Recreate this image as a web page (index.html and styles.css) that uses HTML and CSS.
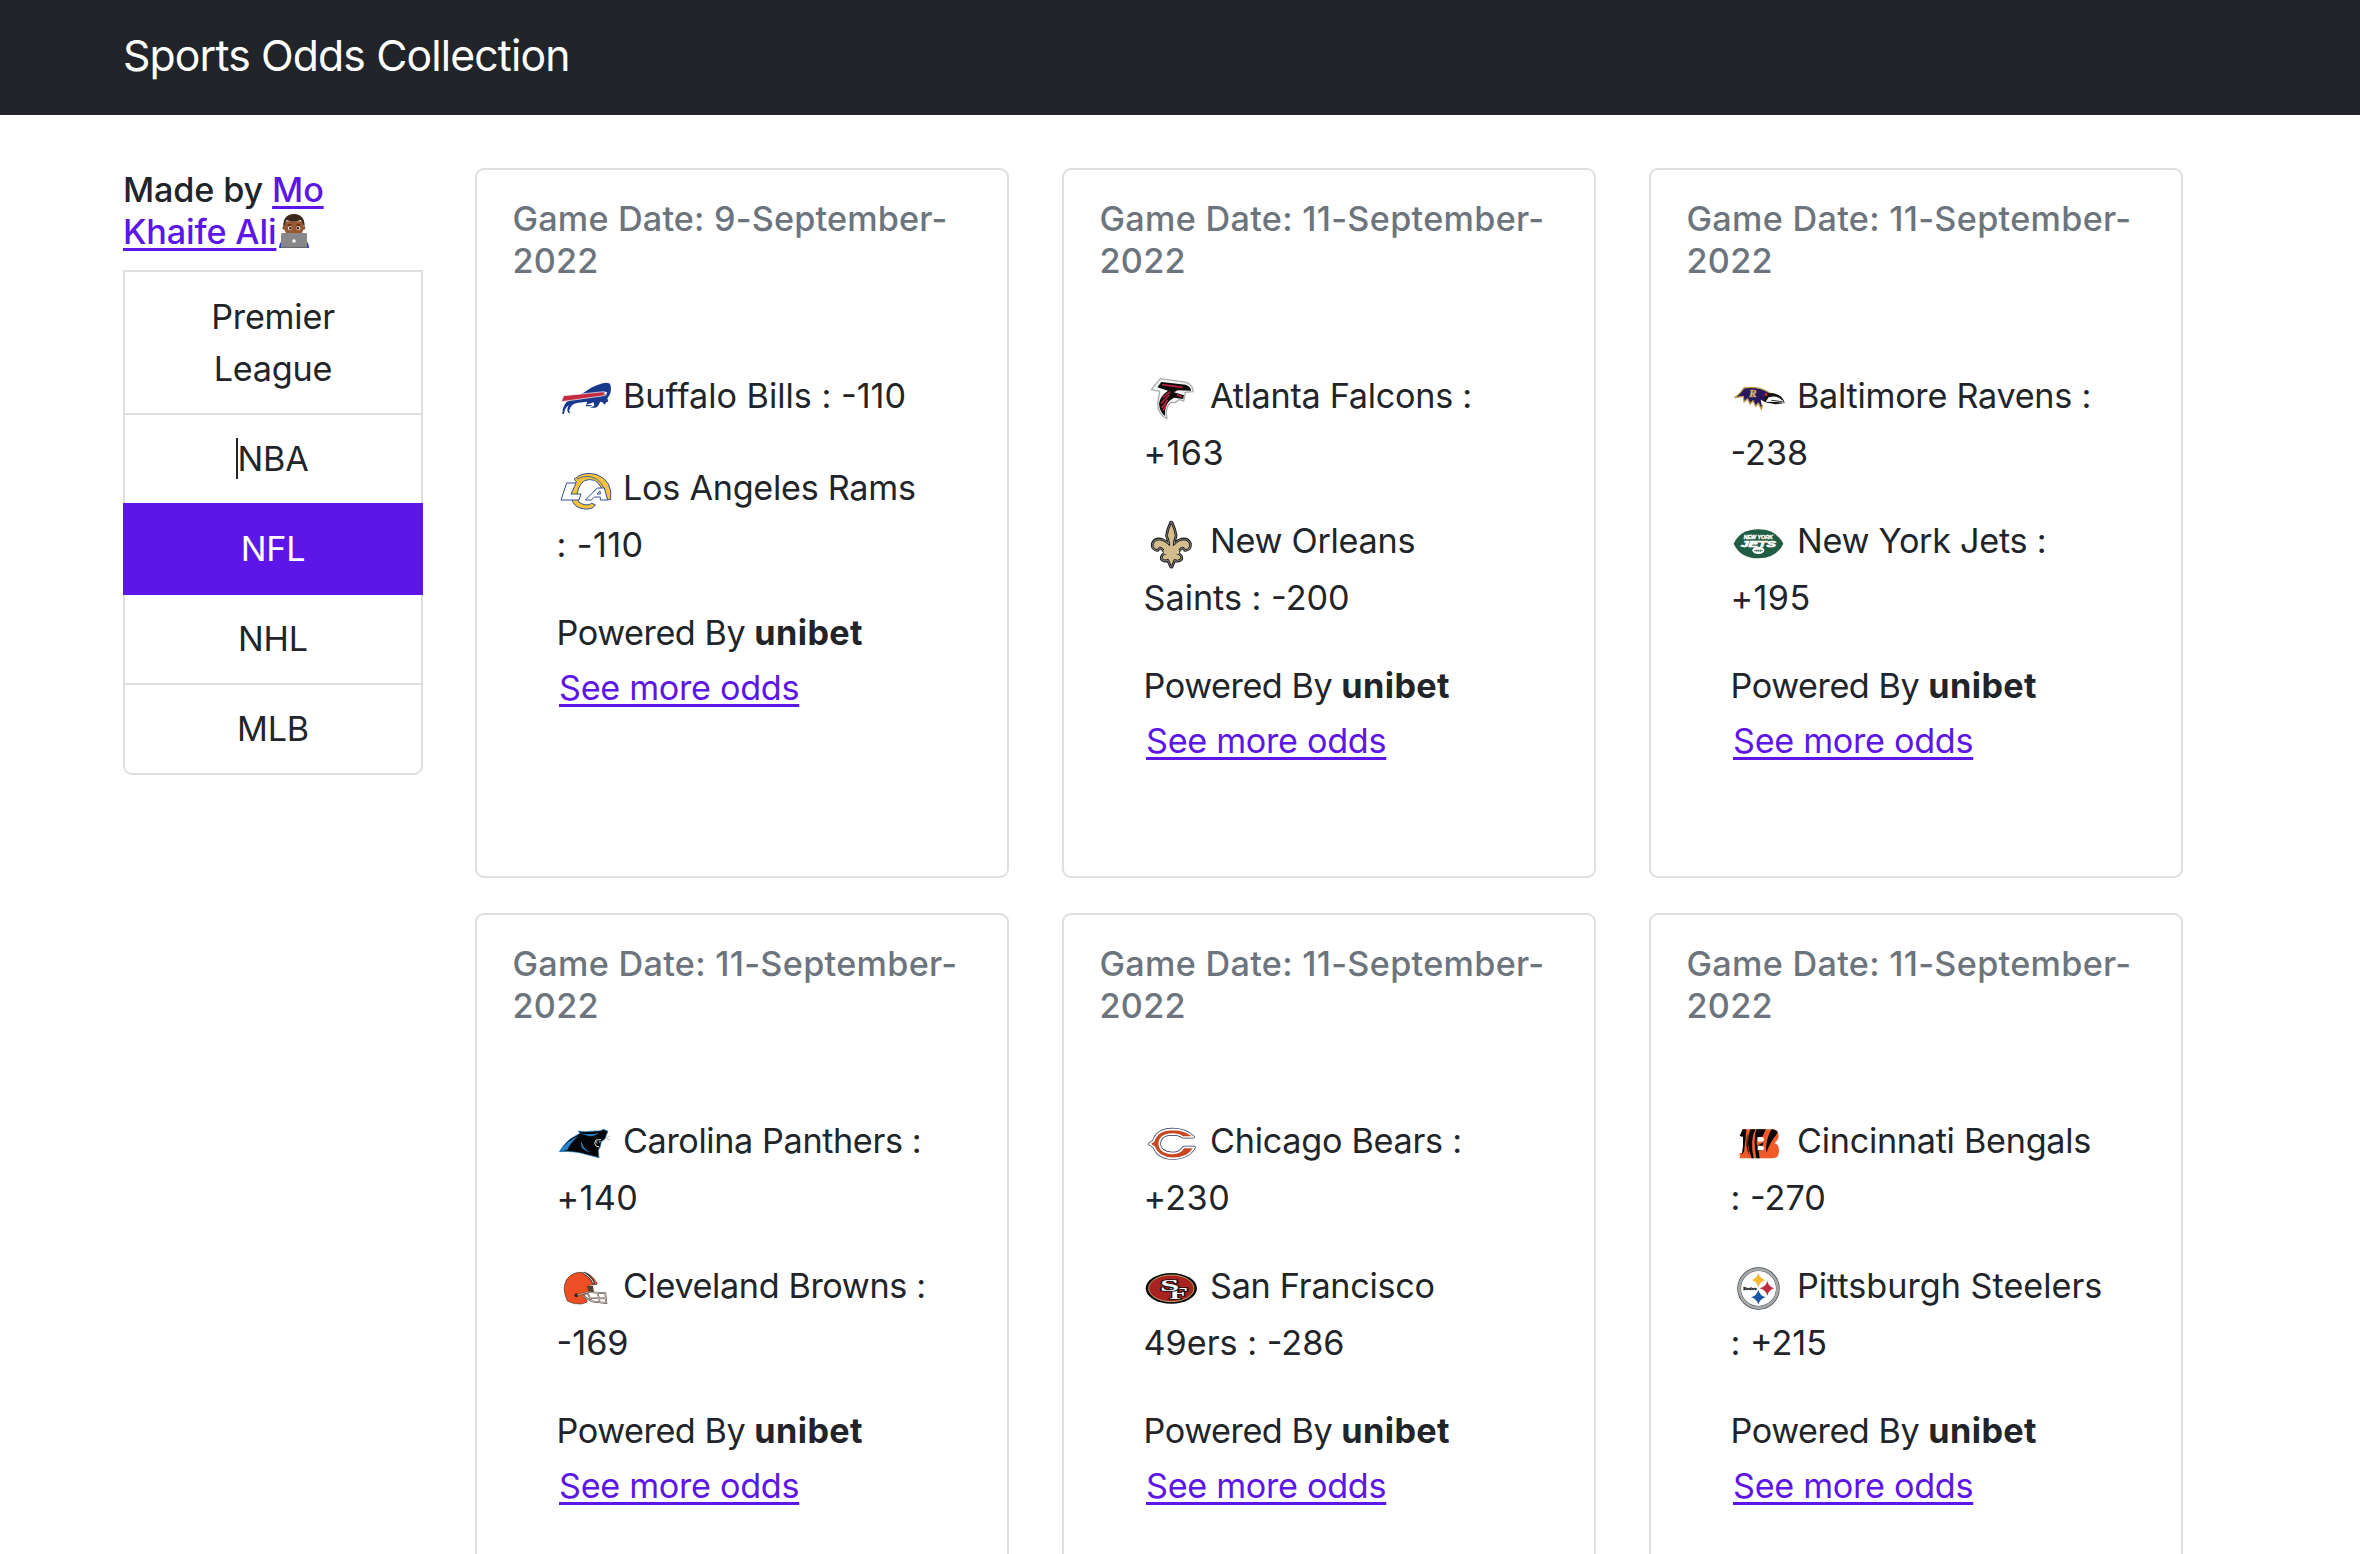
FILE: index.html
```
<!DOCTYPE html>
<html lang="en">
<head>
<meta charset="utf-8">
<title>Sports Odds Collection</title>
<link rel="stylesheet" href="styles.css">
</head>
<body>
<nav class="navbar"><span class="brand">Sports Odds Collection</span></nav>
<main class="container">
  <aside class="sidebar">
    <h5 class="credit">Made by <a href="#">Mo</a><br><a href="#">Khaife Ali</a><svg class="emoji" viewBox="540 642 90 102"><path fill="#303ed8" d="M540 744Q541 724 554 720H618Q629 724 630 744z"/><circle cx="555" cy="684" r="5" fill="#854b2d"/><circle cx="614" cy="684" r="5" fill="#854b2d"/><path fill="#99582f" d="M555 664H614V684Q611 708 585 708Q559 708 555 684z"/><path fill="#3d271d" d="M553 681Q551 643 585 642Q618 643 617 681L612 673Q611 665 605 660Q583 669 563 660Q558 666 558 674z"/><circle cx="573" cy="685" r="6" fill="#f5eee8"/><circle cx="598" cy="685" r="6" fill="#f5eee8"/><circle cx="574" cy="685" r="3.8" fill="#3c1d0d"/><circle cx="597" cy="685" r="3.8" fill="#3c1d0d"/><path d="M566 675h11M593 675h11" stroke="#351d12" stroke-width="3"/><rect x="546" y="699" width="78" height="45" rx="4" fill="#88888b"/><path d="M546 742h78" stroke="#666" stroke-width="3"/><circle cx="585" cy="723" r="5" fill="#fff"/></svg></h5>
    <div class="list">
      <a class="item">Premier<br>League</a>
      <a class="item"><span class="nba">NBA</span></a>
      <a class="item active">NFL</a>
      <a class="item">NHL</a>
      <a class="item">MLB</a>
    </div>
  </aside>
  <section class="cards">
    <article class="card">
      <h5 class="date first">Game Date: 9-September-<br>2022</h5>
      <div class="body">
        <p><svg class="logo" viewBox="48 29 168 168"><path fill="#17388b" d="M128 97Q155 78 176 72Q190 64 205 69Q212 77 209 94Q207 106 199 114L202 123Q194 126 191 133L184 126L177 124Q173 139 163 142H147L160 136L158 126L135 134H154L149 138H134L139 124L112 127Q90 128 84 151L88 157H81Q76 146 84 134Q70 144 69 161H64Q64 140 77 124z"/><path fill="#c32b42" stroke="#fff" stroke-width="2" d="M61 124L68 106L190 94V106z"/><path fill="#fff" d="M190 94l8 1l-3 13z"/></svg><span class="name loose">Buffalo Bills : -110</span></p>
        <p><svg class="logo" viewBox="48 306 168 168"><path fill="#f6c33b" stroke="#30539b" stroke-width="3" d="M99 358Q126 332 168 344Q216 363 209 419H188Q187 376 161 361Q126 351 113 384Q98 424 124 432Q143 438 151 430L163 434Q156 449 131 447Q94 443 91 411Q87 376 107 365z"/><path fill="none" stroke="#30539b" stroke-width="2.5" d="M108 357Q151 336 180 369Q194 386 194 407"/><path fill="#fff" stroke="#30539b" stroke-width="3" stroke-linejoin="round" d="M77 369H105L90 402H120L114 420H60z"/><path fill="#fff" stroke="#30539b" stroke-width="3" stroke-linejoin="round" d="M133 420L169 384H190L200 420H178V411H160L151 420zM168 402H178L177 393z"/></svg><span class="name">Los Angeles Rams</span><br><span class="odds">: -110</span></p>
        <p><span class="powered">Powered By </span><b>unibet</b></p><a class="more" href="#">See more odds</a>
      </div>
    </article>
    <article class="card">
      <h5 class="date">Game Date: 11-September-<br>2022</h5>
      <div class="body">
        <p><svg class="logo" viewBox="39 29 168 168"><path fill="#f5f5f5" stroke="#a9afb0" stroke-width="4" stroke-linejoin="round" d="M61 88L88 55L167 66Q187 76 186 94L173 95L162 96V104L158 122L145 118L132 127L119 126Q100 145 108 175Q80 161 80 130L86 93z"/><path fill="#0c0c0d" d="M79 81L91 65L164 73Q181 80 180 91L140 90L129 96L159 105L156 116L130 112Q100 124 102 167Q86 154 84 130Q87 107 111 91z"/><path stroke="#b51f3c" stroke-width="5" fill="none" d="M93 73L155 81M118 94L95 112M115 104L90 129M110 119L92 143M106 132L96 151M138 103L152 110"/></svg><span class="name">Atlanta Falcons :</span><br><span class="odds">+163</span></p>
        <p><svg class="logo" viewBox="39 464 168 168"><g fill="#d3bd8c" stroke-linejoin="round"><path stroke="#1d1c1c" stroke-width="13" d="M121 488Q131 510 133 526Q127 542 127 556Q136 547 146 541Q168 533 176 551Q177 566 163 568Q158 556 147 564L135 580Q149 582 150 595Q138 604 130 597L121 618L112 597Q101 603 93 595Q93 583 107 580L95 564Q84 556 79 568Q65 566 66 551Q74 533 96 541Q108 547 116 556Q116 542 109 526Q111 510 121 488z"/><path stroke="#8f8f8f" stroke-width="7" d="M121 488Q131 510 133 526Q127 542 127 556Q136 547 146 541Q168 533 176 551Q177 566 163 568Q158 556 147 564L135 580Q149 582 150 595Q138 604 130 597L121 618L112 597Q101 603 93 595Q93 583 107 580L95 564Q84 556 79 568Q65 566 66 551Q74 533 96 541Q108 547 116 556Q116 542 109 526Q111 510 121 488z"/><path stroke="#1d1c1c" stroke-width="3" d="M121 488Q131 510 133 526Q127 542 127 556Q136 547 146 541Q168 533 176 551Q177 566 163 568Q158 556 147 564L135 580Q149 582 150 595Q138 604 130 597L121 618L112 597Q101 603 93 595Q93 583 107 580L95 564Q84 556 79 568Q65 566 66 551Q74 533 96 541Q108 547 116 556Q116 542 109 526Q111 510 121 488z"/></g><path stroke="#d3bd8c" stroke-width="12" d="M98 575h46"/></svg><span class="name">New Orleans</span><br>Saints : -200</p>
        <p><span class="powered">Powered By </span><b>unibet</b></p><a class="more" href="#">See more odds</a>
      </div>
    </article>
    <article class="card">
      <h5 class="date">Game Date: 11-September-<br>2022</h5>
      <div class="body">
        <p><svg class="logo" viewBox="45 29 168 168"><path fill="#291660" stroke="#ba9a45" stroke-width="4" stroke-linejoin="round" d="M56 112Q75 98 84 83Q122 77 151 92Q165 98 171 107L157 121L142 124L136 147L127 128L119 138L111 121L102 131L95 115L84 125L82 108z"/><path fill="#111" d="M148 106Q159 94 178 100Q202 107 206 128L179 132L142 125z"/><path fill="#fff" d="M158 111Q179 104 193 115Q201 120 204 127L177 125L149 124zM134 118L156 130L137 134z"/><path d="M166 120L199 124" stroke="#222" stroke-width="3"/><circle cx="150" cy="103" r="4" fill="#d33"/><text x="100" y="111" class="raven">R</text></svg><span class="name">Baltimore Ravens :</span><br>-238</p>
        <p><svg class="logo" viewBox="45 464 168 168"><path fill="#215c45" d="M53 550Q73 507 127 507T202 550Q181 594 127 594T53 550z"/><ellipse cx="127" cy="570" rx="18" ry="11" fill="#fff"/><text x="127" y="560" text-anchor="middle" class="jets" textLength="106" lengthAdjust="spacingAndGlyphs">JETS</text><text x="127" y="536" text-anchor="middle" class="ny" textLength="88" lengthAdjust="spacingAndGlyphs">NEW YORK</text><path d="M113 571h28M121 567v8M127 567v8M133 567v8" stroke="#215c45" stroke-width="2"/></svg><span class="name">New York Jets :</span><br><span class="odds">+195</span></p>
        <p><span class="powered">Powered By </span><b>unibet</b></p><a class="more" href="#">See more odds</a>
      </div>
    </article>
    <article class="card">
      <h5 class="date">Game Date: 11-September-<br>2022</h5>
      <div class="body">
        <p><svg class="logo" viewBox="48 17 168 168"><path fill="#050608" stroke="#218bd0" stroke-width="2" d="M55 127Q78 91 99 82Q112 75 117 72L111 65L130 67L178 64L188 60L201 66L195 80Q196 88 181 97L178 112L172 123L174 145L138 136Q100 124 55 127z"/><path fill="#2684cf" d="M56 127Q81 91 112 81Q92 96 79 121L69 124zM116 72Q151 79 174 70Q166 79 145 81zM122 95Q123 116 148 130L137 126Q114 114 122 95z"/><path fill="none" stroke="#d8dadd" stroke-width="3" d="M180 91L165 92L161 101L165 110L175 113M166 96l2 6M177 95l-1 5"/><path stroke="#aaa" stroke-width="2" fill="none" d="M194 85L208 80M192 87L209 92"/></svg><span class="name snug">Carolina Panthers :</span><br><span class="odds">+140</span></p>
        <p><svg class="logo" viewBox="48 453 168 168"><path fill="#ee4e23" stroke="#463328" stroke-width="2" d="M79 576Q62 539 76 513Q94 485 131 491Q153 496 163 516Q171 521 168 526L145 529L141 553L129 557L139 579L121 585Q98 587 79 576z"/><path d="M127 491Q151 502 159 525" fill="none" stroke="#392a22" stroke-width="8"/><path d="M127 491Q150 504 158 523" fill="none" stroke="#eee" stroke-width="3"/><circle cx="106" cy="559" r="6" fill="#39251d"/><path fill="#56402d" d="M138 531h18l3 18l-16 2z"/><path fill="none" stroke="#493b31" stroke-width="5" d="M109 558L142 549L193 553L196 582L153 577L127 562M170 551L176 578M140 553L153 577M144 567L195 568"/><path fill="none" stroke="#f4eee6" stroke-width="2" d="M109 558L142 549L193 553L196 582L153 577L127 562M170 551L176 578M140 553L153 577M144 567L195 568"/></svg><span class="name snug">Cleveland Browns :</span><br>-169</p>
        <p><span class="powered">Powered By </span><b>unibet</b></p><a class="more" href="#">See more odds</a>
      </div>
    </article>
    <article class="card">
      <h5 class="date">Game Date: 11-September-<br>2022</h5>
      <div class="body">
        <p><svg class="logo" viewBox="39 17 168 168"><g fill="#c94720" stroke-linejoin="round"><path stroke="#263147" stroke-width="9" d="M56 104L68 95Q79 60 126 60Q166 61 187 83H155Q145 74 123 74Q85 76 85 103Q86 130 124 132Q148 132 158 114H190Q172 147 124 147Q82 146 69 112z"/><path stroke="#fff" stroke-width="5" d="M56 104L68 95Q79 60 126 60Q166 61 187 83H155Q145 74 123 74Q85 76 85 103Q86 130 124 132Q148 132 158 114H190Q172 147 124 147Q82 146 69 112z"/></g></svg><span class="name">Chicago Bears :</span><br><span class="odds">+230</span></p>
        <p><svg class="logo" viewBox="39 453 168 168"><ellipse cx="121" cy="538" rx="77" ry="46" fill="#080606"/><ellipse cx="121" cy="538" rx="68" ry="40" fill="#a8231d" stroke="#c1a36c" stroke-width="3"/><g class="sf"><text x="115" y="569" textLength="56" lengthAdjust="spacingAndGlyphs">F</text><text x="87" y="545" textLength="58" lengthAdjust="spacingAndGlyphs">S</text></g></svg><span class="name">San Francisco</span><br>49ers : -286</p>
        <p><span class="powered">Powered By </span><b>unibet</b></p><a class="more" href="#">See more odds</a>
      </div>
    </article>
    <article class="card">
      <h5 class="date">Game Date: 11-September-<br>2022</h5>
      <div class="body">
        <p><svg class="logo" viewBox="45 17 168 168"><path fill="#f15a29" d="M80 60H166Q189 60 188 82Q186 94 176 101Q190 107 189 126Q189 147 169 147H71V131H82V82L71 80z"/><path fill="#080706" d="M80 60H91Q89 93 84 127L77 136L81 111V82L71 80zM103 60H118Q101 92 113 147H107Q87 99 103 60zM121 60H150L139 82L125 84Q119 99 124 109L142 99L137 123L128 125L131 147H121Q111 92 121 60zM166 60Q184 60 185 71Q162 98 151 130Q146 98 166 60zM94 72Q94 117 101 138Q86 118 94 72z"/><path fill="#fff" d="M125 83h13q6 2 6 7t-6 7h-13zM125 109h13q6 2 6 7t-6 7h-13z"/></svg><span class="name">Cincinnati Bengals</span><br>: -270</p>
        <p><svg class="logo" viewBox="45 453 168 168"><circle cx="127.500" cy="538.500" r="58" fill="#fff" stroke="#3b3f41" stroke-width="11"/><circle cx="127.500" cy="538.500" r="57.500" fill="none" stroke="#a6aaad" stroke-width="8"/><path fill="#f6b832" d="M127 491Q131 508 148 513Q131 518 127 536Q123 518 107 513Q123 508 127 491z"/><path fill="#c02b42" d="M154 516Q158 533 175 538Q158 543 154 560Q150 543 130 538Q150 533 154 516z"/><path fill="#1956a3" d="M127 542Q131 559 149 565Q131 570 127 587Q123 570 105 565Q123 559 127 542z"/><text x="82" y="543" class="steel" textLength="40" lengthAdjust="spacingAndGlyphs">Steelers</text></svg><span class="name loose">Pittsburgh Steelers</span><br>: +215</p>
        <p><span class="powered">Powered By </span><b>unibet</b></p><a class="more" href="#">See more odds</a>
      </div>
    </article>
  </section>
</main>
</body>
</html>
```
FILE: styles.css
```
* { box-sizing: border-box; }
body { margin: 0; height: 1554px; overflow: hidden; background: #fff; color: #212529; font: 400 34.2px/52.8px Inter, "Liberation Sans", sans-serif; }
h5, p { margin: 0; }
a { color: #5c16e8; text-decoration: underline; text-decoration-thickness: 3px; text-underline-offset: 4px; text-decoration-skip-ink: none; }
.navbar { display: flex; align-items: center; height: 115px; padding: 0 123px 3px; background: #212529; color: #fff; }
.brand { font-size: 42.7px; letter-spacing: -0.85px; }
.container { display: flex; align-items: flex-start; gap: 52px; padding: 53px 178px 0 123px; }
.sidebar { width: 300px; flex: none; }
.credit, .date { font-size: 34.2px; font-weight: 500; line-height: 42.2px; }
.credit { padding-top: 1px; margin-bottom: 16.6px; white-space: nowrap; letter-spacing: -0.14px; }
.emoji { width: 30px; height: 34px; margin-left: 3px; vertical-align: -4px; }
.list { border: 2px solid #dfdfdf; border-radius: 0 0 9px 9px; letter-spacing: -0.2px; }
.item { display: block; padding: 18.6px 35px 16.6px; text-align: center; color: #212529; text-decoration: none; }
.item + .item { border-top: 2px solid #dfdfdf; }
.item.active { margin: 0 -2px; color: #fff; background: #5c16e8; border-top-color: #5c16e8; }
.item.active + .item { border-top: 0; padding-top: 18.6px; position: relative; box-shadow: -2px -2px 0 #5c16e8; box-shadow: none; }
.item.active { padding-bottom: 18.6px; }
.nba { position: relative; }
.nba::before { content: ""; position: absolute; left: -1px; top: 0; width: 2px; height: 41px; background: #212529; }
.cards { flex: 1; display: grid; grid-template-columns: repeat(3, 534px); grid-auto-rows: 710px; gap: 35.2px 53px; }
.card { padding: 28px 35.5px; border: 2px solid #dfdfdf; border-radius: 9px; }
.date { color: #6c757d; white-space: nowrap; letter-spacing: 0.3px; }
.date.first { letter-spacing: 0.18px; }
.body { padding: 87.8px 0 0 44px; white-space: nowrap; }
.body p { margin-bottom: 35.2px; }
.body p:last-of-type { margin-bottom: 0; }
.logo { width: 56px; height: 56px; margin: 0 10.5px 1px 0; vertical-align: -19px; overflow: visible; }
.name { letter-spacing: -0.27px; }
.name.loose { letter-spacing: 0; }
.name.snug { letter-spacing: -0.38px; }
.odds { letter-spacing: 0.4px; }
.powered { letter-spacing: -0.45px; }
b { letter-spacing: 0.4px; }
.more { display: inline-block; margin: 2px 0 0 2.5px; letter-spacing: -0.3px; }
.raven { font: italic 700 32px "Liberation Serif", serif; fill: #e9dfbd; stroke: #b6983e; stroke-width: 2px; }
.jets { font: italic 900 29px "Liberation Sans", sans-serif; fill: #fff; stroke: #fff; stroke-width: 2px; }
.ny { font: italic 900 14px "Liberation Sans", sans-serif; fill: #fff; stroke: #fff; }
.sf { font: 700 48px "Liberation Serif", serif; fill: #fff; stroke: #111; stroke-width: 5px; paint-order: stroke; }
.steel { font: 900 13px "Liberation Sans", sans-serif; fill: #111; stroke: #111; stroke-width: 1px; }
```
